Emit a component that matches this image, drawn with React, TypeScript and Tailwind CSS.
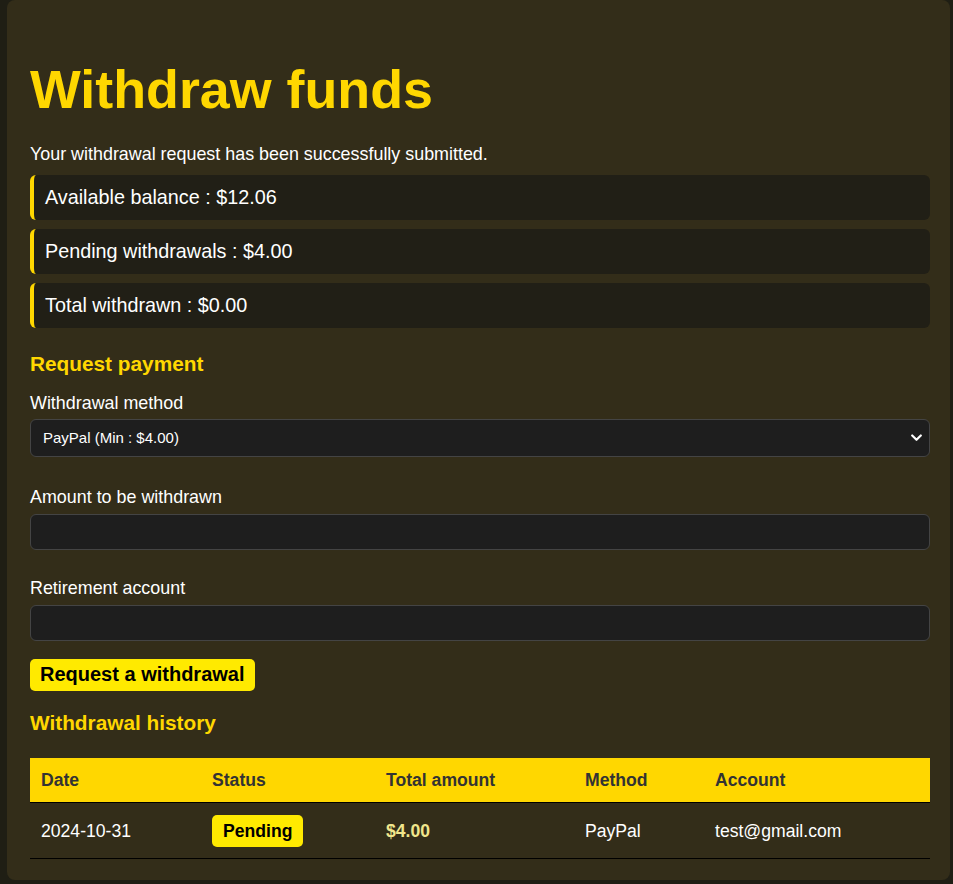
import React from "react";

const stats = [
  "Available balance : $12.06",
  "Pending withdrawals : $4.00",
  "Total withdrawn : $0.00",
];

export default function App() {
  return (
    <div className="min-h-[884px] bg-[#1f1e14] pl-[7px] pr-[3px] pb-[4px] font-['Liberation_Sans',Arial,sans-serif] text-white">
      <div className="rounded-lg bg-[#332d19] pl-[23px] pr-[20px] pt-[58px] pb-[21px]">
        <h1 className="text-[53.8px] leading-[62px] font-bold text-[#ffd700]">Withdraw funds</h1>
        <p className="mt-[24px] text-[17.9px] leading-[20px] text-white">
          Your withdrawal request has been successfully submitted.
        </p>
        <div className="mt-[11px] flex flex-col gap-[9px]">
          {stats.map((s) => (
            <div
              key={s}
              className="rounded-md border-l-4 border-[#ffd700] bg-[#211f16] pl-[11px] py-[11px] text-[19.8px] leading-[23px] text-white"
            >
              {s}
            </div>
          ))}
        </div>

        <h2 className="mt-[24px] text-[20.8px] leading-[24px] font-bold text-[#ffd700]">Request payment</h2>

        <label className="mt-[17px] block text-[17.9px] leading-[20px]">Withdrawal method</label>
        <div className="relative mt-[6px]">
          <select
            className="block h-[38px] w-full appearance-none rounded-md border border-[#444] bg-[#1e1e1e] pl-[12px] text-[15px] text-white outline-none"
            defaultValue="paypal"
          >
            <option value="paypal">PayPal (Min : $4.00)</option>
          </select>
          <svg
            className="pointer-events-none absolute right-[8px] top-[15px]"
            width="11"
            height="8"
            viewBox="0 0 11 8"
            fill="none"
          >
            <path d="M1.2 1.5 L5.5 5.8 L9.8 1.5" stroke="white" strokeWidth="2.2" strokeLinecap="round" strokeLinejoin="round" />
          </svg>
        </div>

        <label className="mt-[30px] block text-[17.9px] leading-[20px]">Amount to be withdrawn</label>
        <input
          type="text"
          className="mt-[7px] block h-[36px] w-full rounded-md border border-[#444] bg-[#1e1e1e] px-[12px] text-white outline-none"
        />

        <label className="mt-[28px] block text-[17.9px] leading-[20px]">Retirement account</label>
        <input
          type="text"
          className="mt-[7px] block h-[36px] w-full rounded-md border border-[#444] bg-[#1e1e1e] px-[12px] text-white outline-none"
        />

        <button className="mt-[18px] block rounded-[5px] bg-[#ffea00] px-[10px] pt-[3px] pb-[5px] text-[20px] leading-[24px] font-bold text-black">
          Request a withdrawal
        </button>

        <h2 className="mt-[20px] text-[20.8px] leading-[24px] font-bold text-[#ffd700]">Withdrawal history</h2>

        <div className="mt-[23px] text-[17.6px] leading-[20px]">
          <div className="grid h-[45px] grid-cols-[171px_174px_199px_130px_226px] items-center border-b border-black bg-[#ffd700] font-bold text-[#333]">
            <div className="px-[11px]">Date</div>
            <div className="px-[11px]">Status</div>
            <div className="px-[11px]">Total amount</div>
            <div className="px-[11px]">Method</div>
            <div className="px-[11px]">Account</div>
          </div>
          <div className="grid h-[56px] grid-cols-[171px_174px_199px_130px_226px] items-center border-b border-black text-white">
            <div className="px-[11px]">2024-10-31</div>
            <div className="px-[11px]">
              <span className="inline-block rounded-[5px] bg-[#ffea00] px-[11px] py-[6px] font-bold text-black">
                Pending
              </span>
            </div>
            <div className="px-[11px] font-bold text-[#f0e68c]">$4.00</div>
            <div className="px-[11px]">PayPal</div>
            <div className="px-[11px]">test@gmail.com</div>
          </div>
        </div>
      </div>
    </div>
  );
}
